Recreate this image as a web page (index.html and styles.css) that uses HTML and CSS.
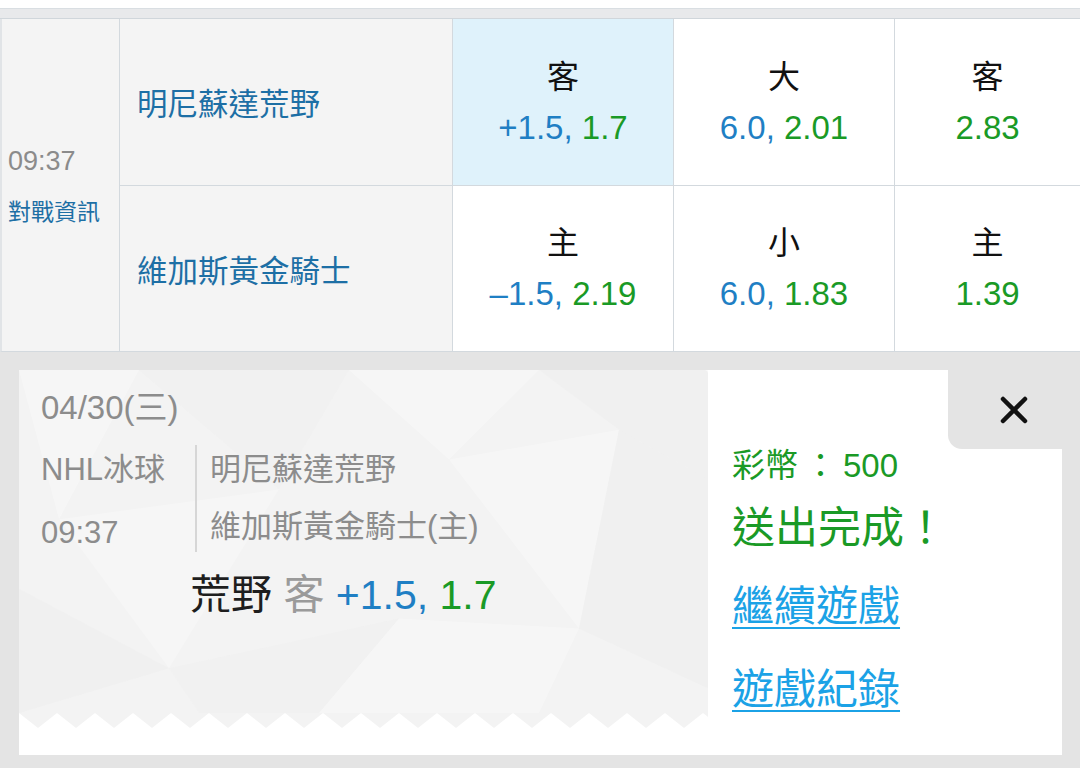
FILE: index.html
```html
<!DOCTYPE html>
<html>
<head>
    <meta charset="utf-8">
    <link rel="stylesheet" href="styles.css">
</head>
<body>
    <div class="top-strip"></div>
    <div class="top-band"></div>

    <div class="board">
        <div class="time-cell">
            <div class="clock">09:37</div>
            <div class="info">對戰資訊</div>
        </div>
        <div class="team-cell">明尼蘇達荒野</div>
        <div class="odd-cell active">
            <div class="side">客</div>
            <div class="val"><span class="line">+1.5,</span> <span class="rate">1.7</span></div>
        </div>
        <div class="odd-cell">
            <div class="side">大</div>
            <div class="val"><span class="line">6.0,</span> <span class="rate">2.01</span></div>
        </div>
        <div class="odd-cell">
            <div class="side">客</div>
            <div class="val"><span class="rate">2.83</span></div>
        </div>

        <div class="team-cell">維加斯黃金騎士</div>
        <div class="odd-cell">
            <div class="side">主</div>
            <div class="val"><span class="line">&ndash;1.5,</span> <span class="rate">2.19</span></div>
        </div>
        <div class="odd-cell">
            <div class="side">小</div>
            <div class="val"><span class="line">6.0,</span> <span class="rate">1.83</span></div>
        </div>
        <div class="odd-cell">
            <div class="side">主</div>
            <div class="val"><span class="rate">1.39</span></div>
        </div>
    </div>

    <div class="sheet">
        <div class="card">
            <div class="ticket">
                <div class="ticket-body">
                    <svg class="ticket-bg" viewBox="0 0 689 345" preserveAspectRatio="none">
                        <polygon points="0,0 120,0 40,150" fill="#ffffff" opacity="0.3"/>
                        <polygon points="120,0 330,0 260,120" fill="#e8e8e8" opacity="0.18"/>
                        <polygon points="330,0 520,0 430,90" fill="#ffffff" opacity="0.3"/>
                        <polygon points="520,0 689,0 689,110 600,60" fill="#e8e8e8" opacity="0.2"/>
                        <polygon points="40,150 260,120 150,300" fill="#ffffff" opacity="0.25"/>
                        <polygon points="430,90 600,60 560,260" fill="#ffffff" opacity="0.3"/>
                        <polygon points="600,60 689,110 689,320 560,260" fill="#e8e8e8" opacity="0.2"/>
                        <polygon points="0,220 150,300 0,345" fill="#e8e8e8" opacity="0.2"/>
                        <polygon points="150,300 380,250 300,345 180,345" fill="#e8e8e8" opacity="0.18"/>
                        <polygon points="380,250 560,260 520,345 300,345" fill="#ffffff" opacity="0.3"/>
                    </svg>
                    <div class="date">04/30(三)</div>
                    <div class="meta">
                        <div class="meta-left">
                            <div>NHL冰球</div>
                            <div>09:37</div>
                        </div>
                        <div class="meta-teams">
                            <div>明尼蘇達荒野</div>
                            <div>維加斯黃金騎士(主)</div>
                        </div>
                    </div>
                    <div class="pick">
                        <span class="pick-team">荒野</span>
                        <span class="pick-side">客</span>
                        <span class="line">+1.5,</span> <span class="rate">1.7</span>
                    </div>
                </div>
                <svg class="zigzag" width="689" height="15">
                    <defs>
                        <pattern id="teeth" width="38" height="15" patternUnits="userSpaceOnUse">
                            <polygon points="0,0 38,0 19,15" fill="#f3f3f3"/>
                        </pattern>
                    </defs>
                    <rect width="689" height="15" fill="url(#teeth)"/>
                </svg>
            </div>

            <div class="result">
                <div class="coins">彩幣<span class="colon">：</span>500</div>
                <div class="done">送出完成！</div>
                <a class="link" href="#">繼續遊戲</a>
                <a class="link" href="#">遊戲紀錄</a>
            </div>

            <div class="close">
                <svg width="28" height="28" viewBox="0 0 28 28">
                    <path d="M3 3 L25 25 M25 3 L3 25" stroke="#111" stroke-width="4.5" stroke-linecap="round" fill="none"/>
                </svg>
            </div>
        </div>
    </div>
</body>
</html>
```

FILE: styles.css
```css
body {
    margin: 0;
    font-family: "Liberation Sans", "Noto Sans CJK TC", sans-serif;
    background-color: #e4e4e4;
}
.top-strip {
    height: 8px;
    background-color: #ffffff;
    border-bottom: 1px solid #d9dee2;
}
.top-band {
    height: 9px;
    background-color: #e8e9eb;
    border-bottom: 1px solid #d0d6db;
}
.board {
    display: grid;
    grid-template-columns: 117px 332px 220px 220px 1fr;
    grid-template-rows: 166px 165px;
    gap: 1px;
    background-color: #d3d9de;
    border-bottom: 1px solid #d3d9de;
    border-left: 2px solid #e1e4e7;
}
.time-cell {
    grid-row: span 2;
    background-color: #f4f4f4;
    display: flex;
    flex-direction: column;
    justify-content: center;
    padding-left: 6px;
    gap: 18px;
}
.clock {
    font-size: 27px;
    line-height: 36px;
    color: #8b8b8b;
}
.info {
    font-size: 23px;
    line-height: 30px;
    color: #1d6fa5;
}
.team-cell {
    background-color: #f4f4f4;
    display: flex;
    align-items: center;
    padding-left: 17px;
    font-size: 30.5px;
    color: #1d6fa5;
}
.odd-cell {
    background-color: #ffffff;
    display: flex;
    flex-direction: column;
    align-items: center;
    justify-content: center;
    gap: 1px;
}
.odd-cell.active {
    background-color: #dff2fb;
}
.side {
    font-size: 32px;
    line-height: 50px;
    color: #111111;
}
.val {
    font-size: 33px;
    line-height: 50px;
}
.line {
    color: #1f7fc4;
}
.rate {
    color: #1a9a26;
}
.sheet {
    padding: 18px 18px 13px 19px;
}
.card {
    position: relative;
    display: flex;
    height: 385px;
    background-color: #ffffff;
}
.ticket {
    width: 689px;
    display: flex;
    flex-direction: column;
    padding-bottom: 27px;
}
.ticket-body {
    position: relative;
    flex: 1;
    background-color: #f3f3f3;
    padding: 19px 0 0 22px;
    color: #8c8c8c;
    border-top-right-radius: 4px;
}
.ticket-bg {
    position: absolute;
    left: 0;
    top: 0;
    width: 100%;
    height: 100%;
}
.date, .meta, .pick {
    position: relative;
}
.date {
    font-size: 33px;
    line-height: 38px;
}
.meta {
    display: flex;
    margin-top: 18px;
    font-size: 31px;
}
.meta-left {
    width: 154px;
    display: flex;
    flex-direction: column;
    gap: 13px;
    line-height: 50px;
}
.meta-teams {
    align-self: flex-start;
    border-left: 2px solid #d6d6d6;
    padding-left: 13px;
    display: flex;
    flex-direction: column;
    gap: 7px;
    line-height: 50px;
}
.pick {
    margin: 12px 0 0 149px;
    font-size: 41px;
    line-height: 50px;
}
.pick-team {
    color: #1e1e1e;
}
.pick-side {
    color: #9a9a9a;
}
.zigzag {
    display: block;
}
.result {
    flex: 1;
    padding: 76px 0 0 24px;
    display: flex;
    flex-direction: column;
    align-items: flex-start;
}
.coins {
    font-size: 33px;
    line-height: 40px;
    color: #1a9a26;
}
.colon {
    margin: 0 6px;
}
.done {
    margin-top: 16px;
    font-size: 43px;
    line-height: 52px;
    color: #1a9a26;
}
.link {
    margin-top: 25px;
    font-size: 42px;
    line-height: 56px;
    color: #1ba2e6;
    text-decoration: underline;
    text-underline-offset: 6px;
    text-decoration-thickness: 2px;
}
.link + .link {
    margin-top: 27px;
}
.close {
    position: absolute;
    top: 0;
    right: -18px;
    width: 132px;
    height: 79px;
    background-color: #e4e4e4;
    border-bottom-left-radius: 14px;
    display: flex;
    align-items: center;
    justify-content: center;
}
```
